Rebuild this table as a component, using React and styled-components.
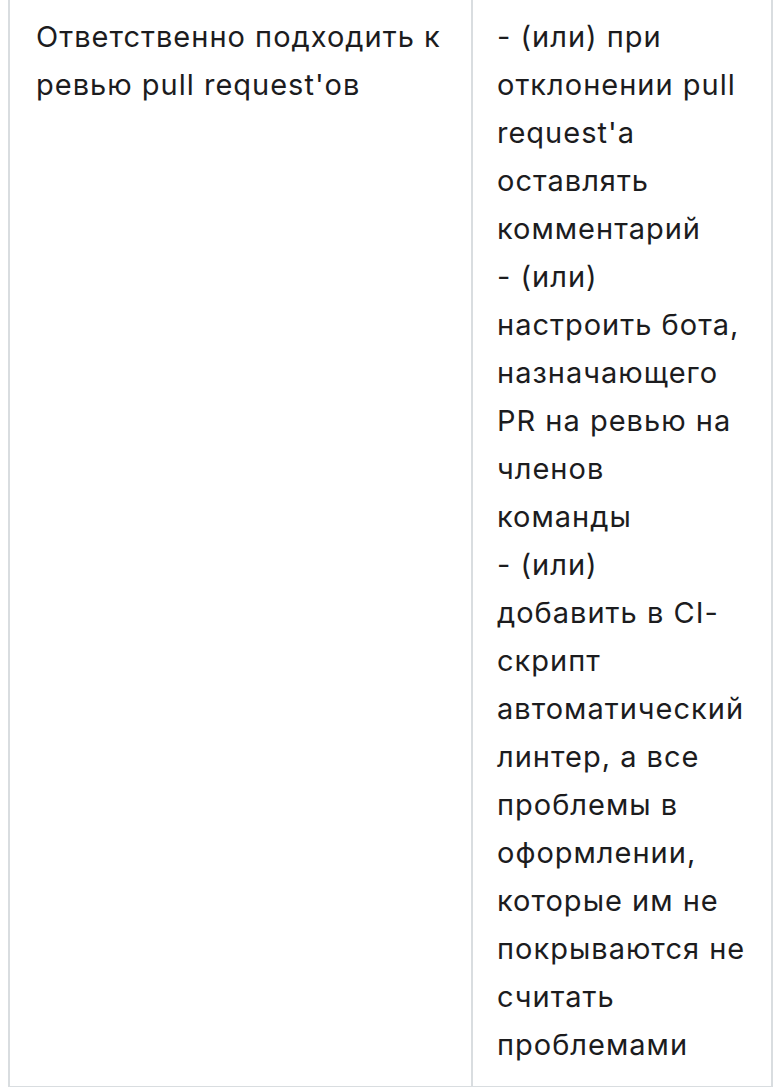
import React from "react";
import styled, { createGlobalStyle } from "styled-components";

const GlobalStyle = createGlobalStyle`
  html, body {
    margin: 0;
    padding: 0;
    background: #ffffff;
  }
  body {
    font-family: Inter, "Noto Sans", "Liberation Sans", sans-serif;
    color: #1c1c1e;
    -webkit-font-smoothing: antialiased;
  }
`;

const rows = [
  {
    task: ["Ответственно подходить к", "ревью pull request'ов"],
    ways: [
      "- (или) при",
      "отклонении pull",
      "request'a",
      "оставлять",
      "комментарий",
      "- (или)",
      "настроить бота,",
      "назначающего",
      "PR на ревью на",
      "членов",
      "команды",
      "- (или)",
      "добавить в CI-",
      "скрипт",
      "автоматический",
      "линтер, а все",
      "проблемы в",
      "оформлении,",
      "которые им не",
      "покрываются не",
      "считать",
      "проблемами",
    ],
  },
];

export default function App() {
  return (
    <>
      <GlobalStyle />
      <Page>
        <Table>
          <colgroup>
            <col style={{ width: 463 }} />
            <col style={{ width: 300 }} />
          </colgroup>
          <tbody>
            {rows.map((row, index) => (
              <tr key={index}>
                <Cell>
                  {row.task.map((line, i) => (
                    <Line key={i}>{line}</Line>
                  ))}
                </Cell>
                <Cell $inset={24}>
                  {row.ways.map((line, i) => (
                    <Line key={i}>{line}</Line>
                  ))}
                </Cell>
              </tr>
            ))}
          </tbody>
        </Table>
      </Page>
    </>
  );
}

const Page = styled.div`
  padding: 0 6px 0 8px;
  margin-top: -2px;
`;

const Table = styled.table`
  width: 763px;
  table-layout: fixed;
  border-collapse: collapse;
  font-size: 29px;
  line-height: 48px;
  letter-spacing: 1px;
`;

const Cell = styled.td`
  vertical-align: top;
  padding: 13px 20px 17px ${(p) => p.$inset || 26}px;
  border: 2px solid #d9dde0;
`;

const Line = styled.span`
  display: block;
  white-space: nowrap;
`;
